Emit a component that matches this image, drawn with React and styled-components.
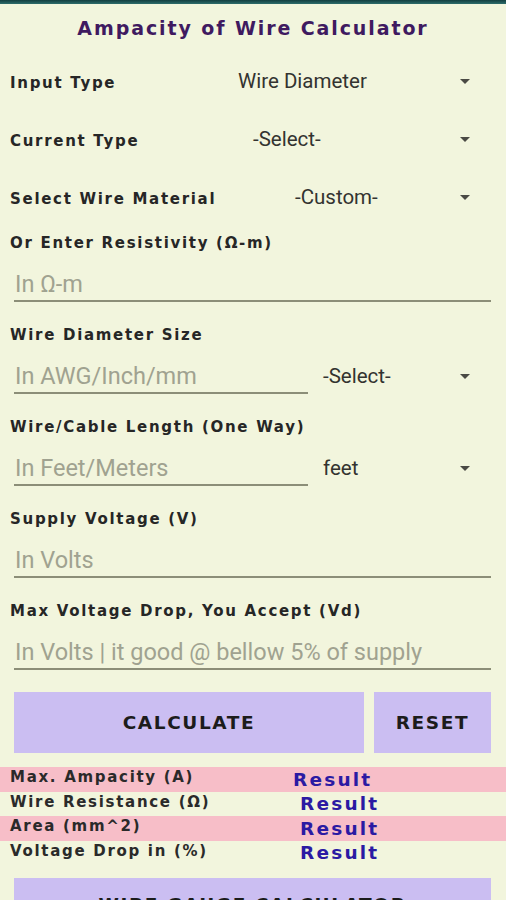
import React from "react";
import styled, { createGlobalStyle } from "styled-components";

const GlobalStyle = createGlobalStyle`
  body {
    margin: 0;
    background-color: #f2f5dd;
    font-family: "DejaVu Sans", sans-serif;
  }
`;

const Page = styled.div`
  width: 506px;
  height: 900px;
  overflow: hidden;
  background-color: #f2f5dd;
`;

const TopBar = styled.div`
  height: 4px;
  background: linear-gradient(#123f40, #2d6d6b);
`;

const Title = styled.h1`
  margin: 0;
  height: 48px;
  line-height: 48px;
  text-align: center;
  font-family: "DejaVu Sans", sans-serif;
  font-size: 19px;
  font-weight: bold;
  letter-spacing: 1.9px;
  color: #3f1a60;
`;

const Form = styled.div`
  display: flex;
  flex-direction: column;
  padding: 0 15px 0 10px;
`;

const SelectRow = styled.div`
  display: grid;
  grid-template-columns: ${(p) => p.$valueX - 10}px 1fr;
  align-items: center;
  height: 58px;
`;

const Label = styled.div`
  font-family: "DejaVu Sans", sans-serif;
  font-size: 15px;
  font-weight: bold;
  color: #262626;
  letter-spacing: 1.7px;
  white-space: nowrap;
`;

const RowLabel = styled(Label)`
  margin-top: 3px;
`;

const Select = styled.div`
  display: flex;
  align-items: center;
  justify-content: space-between;
  font-family: Roboto, sans-serif;
  font-size: 20.5px;
  color: #333330;
`;

const Arrow = styled.span`
  width: 0;
  height: 0;
  margin-right: 21px;
  border-left: 5px solid transparent;
  border-right: 5px solid transparent;
  border-top: 5px solid #4a4a44;
`;

const Field = styled.div`
  display: flex;
  flex-direction: column;
  margin-top: ${(p) => (p.$first ? 0 : 16)}px;
`;

const FieldLabel = styled(Label)`
  height: 34px;
  line-height: 34px;
`;

const InputRow = styled.div`
  display: flex;
  align-items: flex-end;
  padding-left: 4px;
`;

const Input = styled.div`
  width: ${(p) => p.$width || "auto"};
  flex: ${(p) => (p.$width ? "none" : 1)};
  padding-top: 8px;
  line-height: 32px;
  height: 32px;
  border-bottom: 2px solid #8c8e78;
  font-family: Roboto, sans-serif;
  font-size: 23.5px;
  color: #a0a290;
  padding-left: 1px;
  white-space: nowrap;
`;

const InlineSelect = styled(Select)`
  flex: 1;
  margin-left: 15px;
  line-height: 32px;
  padding-top: 6px;
  box-sizing: border-box;
  height: 42px;
`;

const Buttons = styled.div`
  display: grid;
  grid-template-columns: 350px 117px;
  gap: 10px;
  margin: 22px 0 0 4px;
`;

const Button = styled.button`
  height: 61px;
  border: none;
  border-radius: 0;
  background-color: #cbbef2;
  font-family: "DejaVu Sans", sans-serif;
  font-size: 18.5px;
  font-weight: bold;
  color: #1c1c1c;
  letter-spacing: 1.6px;
  padding: 0;
  overflow: hidden;
`;

const Results = styled.div`
  margin-top: 14px;
`;

const ResultRow = styled.div`
  display: grid;
  grid-template-columns: ${(p) => p.$valueX - 10}px 1fr;
  align-items: center;
  height: 24.5px;
  padding-left: 10px;
  background-color: ${(p) => (p.$shaded ? "#f7bec8" : "transparent")};
`;

const ResultLabel = styled.div`
  font-family: "DejaVu Sans", sans-serif;
  font-size: 15px;
  font-weight: bold;
  color: #2a2a2a;
  letter-spacing: 1.7px;
  white-space: nowrap;
  margin-top: -4px;
`;

const ResultValue = styled.div`
  font-family: "DejaVu Sans", sans-serif;
  font-size: 18.5px;
  font-weight: bold;
  color: #2b1aa3;
  letter-spacing: 2.2px;
`;

const BottomButton = styled(Button)`
  display: block;
  width: 477px;
  margin: 13px 0 0 14px;
  text-align: center;
  padding-bottom: 8px;
`;

const selects = [
  { label: "Input Type", value: "Wire Diameter", x: 238 },
  { label: "Current Type", value: "-Select-", x: 253 },
  { label: "Select Wire Material", value: "-Custom-", x: 295 },
];

const results = [
  { label: "Max. Ampacity (A)", x: 293, shaded: true },
  { label: "Wire Resistance (Ω)", x: 300 },
  { label: "Area (mm^2)", x: 300, shaded: true },
  { label: "Voltage Drop in (%)", x: 300 },
];

const App = () => {
  return (
    <Page>
      <GlobalStyle />
      <TopBar />
      <Title>Ampacity of Wire Calculator</Title>
      <Form>
        {selects.map((s) => (
          <SelectRow key={s.label} $valueX={s.x}>
            <RowLabel>{s.label}</RowLabel>
            <Select>
              <span>{s.value}</span>
              <Arrow />
            </Select>
          </SelectRow>
        ))}

        <Field $first>
          <FieldLabel>Or Enter Resistivity (Ω-m)</FieldLabel>
          <InputRow>
            <Input>In Ω-m</Input>
          </InputRow>
        </Field>

        <Field>
          <FieldLabel>Wire Diameter Size</FieldLabel>
          <InputRow>
            <Input $width="293px">In AWG/Inch/mm</Input>
            <InlineSelect>
              <span>-Select-</span>
              <Arrow />
            </InlineSelect>
          </InputRow>
        </Field>

        <Field>
          <FieldLabel>Wire/Cable Length (One Way)</FieldLabel>
          <InputRow>
            <Input $width="293px">In Feet/Meters</Input>
            <InlineSelect>
              <span>feet</span>
              <Arrow />
            </InlineSelect>
          </InputRow>
        </Field>

        <Field>
          <FieldLabel>Supply Voltage (V)</FieldLabel>
          <InputRow>
            <Input>In Volts</Input>
          </InputRow>
        </Field>

        <Field>
          <FieldLabel>Max Voltage Drop, You Accept (Vd)</FieldLabel>
          <InputRow>
            <Input>In Volts | it good @ bellow 5% of supply</Input>
          </InputRow>
        </Field>

        <Buttons>
          <Button>CALCULATE</Button>
          <Button>RESET</Button>
        </Buttons>
      </Form>

      <Results>
        {results.map((r) => (
          <ResultRow key={r.label} $valueX={r.x} $shaded={r.shaded}>
            <ResultLabel>{r.label}</ResultLabel>
            <ResultValue>Result</ResultValue>
          </ResultRow>
        ))}
      </Results>

      <BottomButton>WIRE GAUGE CALCULATOR</BottomButton>
    </Page>
  );
};

export default App;
